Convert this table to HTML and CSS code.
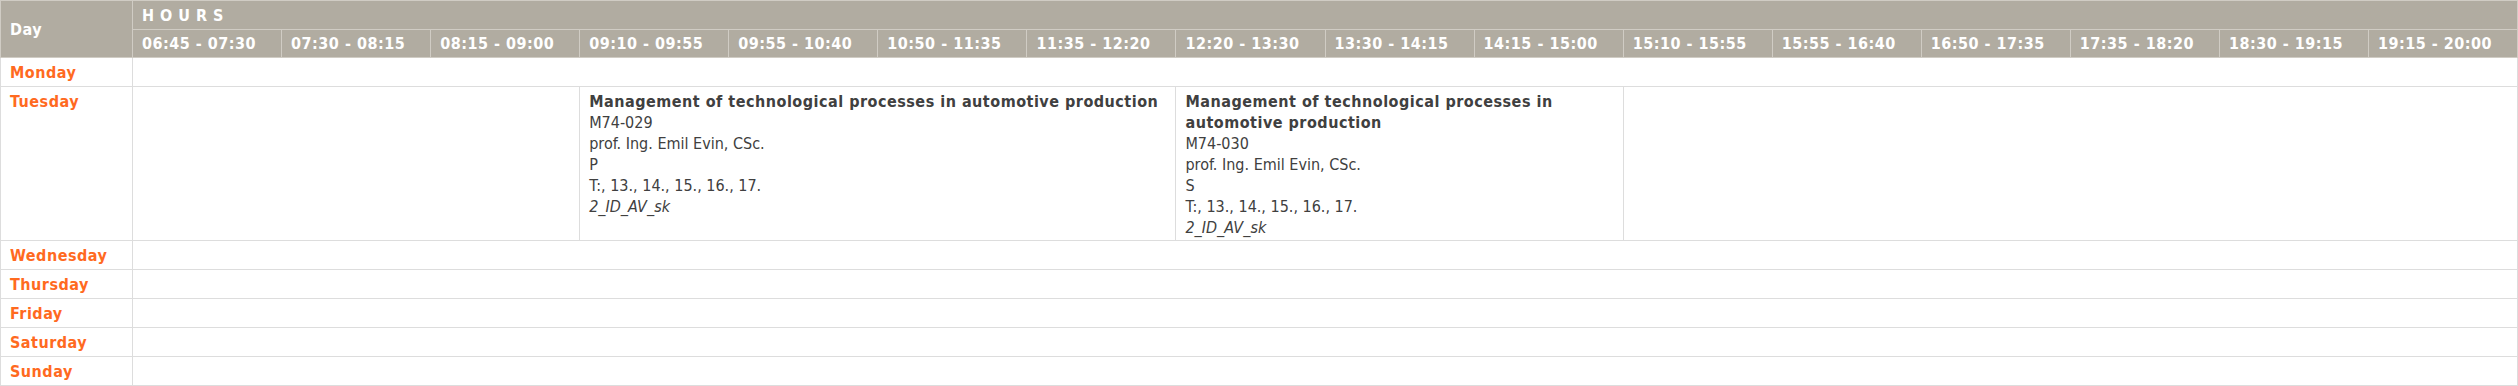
FILE: index.html
```html
<!DOCTYPE html>
<html>
<head>
<meta charset="utf-8">
<title>Timetable</title>
<link rel="stylesheet" href="styles.css">
</head>
<body>
<table class="timetable">
  <colgroup>
    <col class="col-day">
    <col><col><col><col><col><col><col><col>
    <col><col><col><col><col><col><col><col>
  </colgroup>
  <thead>
    <tr>
      <th class="day-head" rowspan="2">Day</th>
      <th class="hours-head" colspan="16">HOURS</th>
    </tr>
    <tr class="times">
      <th>06:45 - 07:30</th>
      <th>07:30 - 08:15</th>
      <th>08:15 - 09:00</th>
      <th>09:10 - 09:55</th>
      <th>09:55 - 10:40</th>
      <th>10:50 - 11:35</th>
      <th>11:35 - 12:20</th>
      <th>12:20 - 13:30</th>
      <th>13:30 - 14:15</th>
      <th>14:15 - 15:00</th>
      <th>15:10 - 15:55</th>
      <th>15:55 - 16:40</th>
      <th>16:50 - 17:35</th>
      <th>17:35 - 18:20</th>
      <th>18:30 - 19:15</th>
      <th>19:15 - 20:00</th>
    </tr>
  </thead>
  <tbody>
    <tr>
      <td class="day">Monday</td>
      <td colspan="16"></td>
    </tr>
    <tr>
      <td class="day">Tuesday</td>
      <td colspan="3"></td>
      <td class="course" colspan="4">
        <div class="title">Management of technological processes in automotive production</div>
        <div>M74-029</div>
        <div>prof. Ing. Emil Evin, CSc.</div>
        <div>P</div>
        <div>T:, 13., 14., 15., 16., 17.</div>
        <div class="group">2_ID_AV_sk</div>
      </td>
      <td class="course" colspan="3">
        <div class="title">Management of technological processes in automotive production</div>
        <div>M74-030</div>
        <div>prof. Ing. Emil Evin, CSc.</div>
        <div>S</div>
        <div>T:, 13., 14., 15., 16., 17.</div>
        <div class="group">2_ID_AV_sk</div>
      </td>
      <td colspan="6"></td>
    </tr>
    <tr>
      <td class="day">Wednesday</td>
      <td colspan="16"></td>
    </tr>
    <tr>
      <td class="day">Thursday</td>
      <td colspan="16"></td>
    </tr>
    <tr>
      <td class="day">Friday</td>
      <td colspan="16"></td>
    </tr>
    <tr>
      <td class="day">Saturday</td>
      <td colspan="16"></td>
    </tr>
    <tr>
      <td class="day">Sunday</td>
      <td colspan="16"></td>
    </tr>
  </tbody>
</table>
</body>
</html>
```

FILE: styles.css
```css
html, body {
  margin: 0;
  padding: 0;
  background: #ffffff;
}

body {
  font-family: "DejaVu Sans Condensed", "DejaVu Sans", sans-serif;
  font-stretch: condensed;
  font-size: 16px;
  line-height: 21px;
  color: #404040;
}

.timetable {
  width: 2518px;
  border-collapse: collapse;
  table-layout: fixed;
  border: 1px solid #d0ccc4;
}

.col-day {
  width: 132px;
}

.timetable th,
.timetable td {
  padding: 4px 9px 3px;
  text-align: left;
  vertical-align: top;
}

.timetable th {
  background: #b1aca1;
  color: #ffffff;
  font-weight: bold;
  letter-spacing: 0.5px;
  border: 1px solid #d0ccc4;
  white-space: nowrap;
  vertical-align: middle;
}

.timetable .times th {
  padding-top: 3px;
}

.timetable .hours-head {
  letter-spacing: 6px;
}

.timetable td {
  border: 1px solid #dddddd;
}

.timetable .day {
  color: #ff6a1f;
  font-weight: bold;
  letter-spacing: 0.5px;
}

.timetable td.course {
  padding-bottom: 2px;
}

.course .title {
  font-weight: bold;
  letter-spacing: 0.5px;
}

.course .group {
  font-style: italic;
}
```
